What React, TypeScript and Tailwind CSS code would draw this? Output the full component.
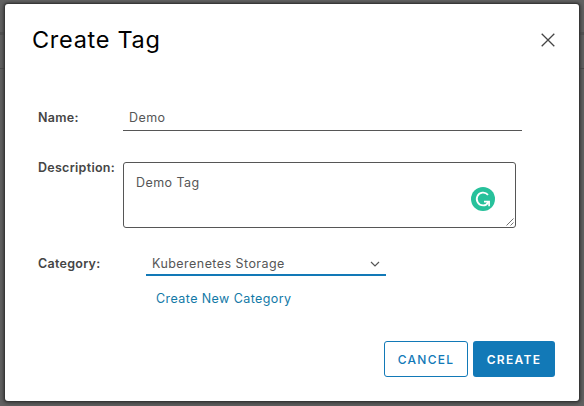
import React from "react";

function CloseIcon() {
  return (
    <svg width="14" height="14" viewBox="0 0 14 14" fill="none" stroke="#454545" strokeWidth="1.3">
      <path d="M.7.7l12.6 12.6M13.3.7L.7 13.3" />
    </svg>
  );
}

function Badge() {
  return (
    <svg width="24" height="24" viewBox="0 0 24 24" fill="none">
      <circle cx="12" cy="12" r="12" fill="#27c19b" />
      <path d="M17 7.8A6.4 6.4 0 1 0 12.2 18.4Q15.6 18.4 17.4 15" stroke="#fff" strokeWidth="1.8" />
      <path d="M13 14.6h5.1v4.6" stroke="#fff" strokeWidth="1.7" />
    </svg>
  );
}

export default function App() {
  return (
    <div className="relative h-[406px] w-[584px] overflow-hidden bg-[#626262] pl-[5px] pt-1 font-['Inter','Noto_Sans',sans-serif] text-[12.5px] leading-5 text-[#565656]">
      <div className="absolute left-0 top-8 h-[3px] w-full bg-[#525252]" />
      <div className="absolute left-0 top-[68px] h-px w-full bg-[#484848]" />
      <div className="relative flex h-[397px] w-[574px] flex-col rounded-[3px] bg-white pl-[33px] shadow-[0_0_2px_1px_#303030,0_1px_4px_2px_#484848]">
        <header className="flex h-[94px] items-start justify-between pr-[24px] pt-5">
          <h1 className="-ml-1.5 whitespace-nowrap text-[23.5px] font-normal leading-8 tracking-[0.7px] text-black">Create Tag</h1>
          <button aria-label="Close" className="mt-[9px]"><CloseIcon /></button>
        </header>
        <div className="flex h-[33px] items-start">
          <label className="w-[85px] pt-[10px] font-semibold tracking-[0.28px] text-[#454545]">Name:</label>
          <div className="h-[33px] w-[399px] border-b border-[#565656] pl-1.5 pt-[10px] tracking-[0.45px]">Demo</div>
        </div>
        <div className="mt-[31px] flex h-[66px]">
          <label className="-mt-1 w-[85px] whitespace-nowrap font-semibold tracking-[0.28px] text-[#454545]">Description:</label>
          <div className="relative h-[66px] w-[393px] rounded-[3px] border border-[#565656] pl-3 pt-[10px] tracking-[0.45px]">
            Demo Tag
            <div className="absolute right-5 top-6"><Badge /></div>
            <svg className="absolute bottom-px right-px" width="8" height="8" fill="none" stroke="#626262" strokeWidth=".9">
              <path d="M.5 7.5l7-7M4.5 7.5l3-3" />
            </svg>
          </div>
        </div>
        <div className="mt-6 flex h-6">
          <label className="w-[108px] pt-0.5 font-semibold tracking-[0.28px] text-[#454545]">Category:</label>
          <div className="flex h-6 w-[240px] items-start justify-between border-b-2 border-[#1279b7] pl-1.5 pr-1.5 pt-0.5 tracking-[0.45px]">
            <span>Kuberenetes Storage</span>
            <svg className="mt-[7px]" width="10" height="7" fill="none" stroke="#565656" strokeWidth="1.2"><path d="M1 1l4 3.9L9 1" /></svg>
          </div>
        </div>
        <a className="ml-[118px] mt-[13px] h-5 whitespace-nowrap tracking-[0.42px] text-[#1279a7]">Create New Category</a>
        <div className="mt-8 flex gap-[5px] pl-[346px] text-[12px]">
          <button className="h-9 w-[84px] rounded-[3px] border border-[#1279b7] pt-px font-medium tracking-[1.3px] text-[#1279b7]">CANCEL</button>
          <button className="h-9 w-[82px] rounded-[3px] bg-[#1279b7] pt-px font-semibold tracking-[1.3px] text-white">CREATE</button>
        </div>
      </div>
    </div>
  );
}
